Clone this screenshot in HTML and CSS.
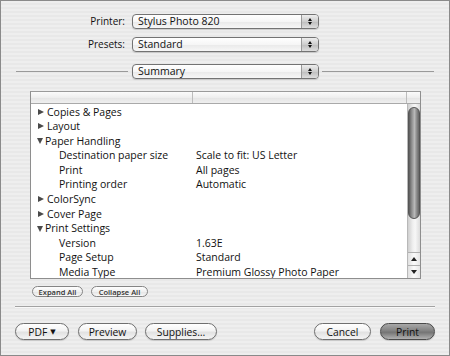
FILE: index.html
```html
<!DOCTYPE html>
<html>
<head>
<meta charset="utf-8">
<link rel="stylesheet" href="styles.css">
</head>
<body>
<div class="win">
  <div class="row">
    <span class="lbl">Printer:</span>
    <div class="popup"><span class="ptext">Stylus Photo 820</span><span class="parr"><i class="up"></i><i class="dn"></i></span></div>
  </div>
  <div class="row row2">
    <span class="lbl">Presets:</span>
    <div class="popup"><span class="ptext">Standard</span><span class="parr"><i class="up"></i><i class="dn"></i></span></div>
  </div>
  <div class="sumrow">
    <span class="line"></span>
    <div class="popup"><span class="ptext">Summary</span><span class="parr"><i class="up"></i><i class="dn"></i></span></div>
    <span class="line line-r"></span>
  </div>

  <div class="table">
    <div class="thead">
      <div class="th th1"></div>
      <div class="th th2"></div>
      <div class="th corner"></div>
    </div>
    <div class="tbody">
      <div class="rows">
        <div class="r"><span class="c1"><i class="tri"></i>Copies &amp; Pages</span><span class="c2"></span></div>
        <div class="r"><span class="c1"><i class="tri"></i>Layout</span><span class="c2"></span></div>
        <div class="r"><span class="c1"><i class="tri open"></i>Paper Handling</span><span class="c2"></span></div>
        <div class="r"><span class="c1 child">Destination paper size</span><span class="c2">Scale to fit: US Letter</span></div>
        <div class="r"><span class="c1 child">Print</span><span class="c2">All pages</span></div>
        <div class="r"><span class="c1 child">Printing order</span><span class="c2">Automatic</span></div>
        <div class="r"><span class="c1"><i class="tri"></i>ColorSync</span><span class="c2"></span></div>
        <div class="r"><span class="c1"><i class="tri"></i>Cover Page</span><span class="c2"></span></div>
        <div class="r"><span class="c1"><i class="tri open"></i>Print Settings</span><span class="c2"></span></div>
        <div class="r"><span class="c1 child">Version</span><span class="c2">1.63E</span></div>
        <div class="r"><span class="c1 child">Page Setup</span><span class="c2">Standard</span></div>
        <div class="r"><span class="c1 child">Media Type</span><span class="c2">Premium Glossy Photo Paper</span></div>
      </div>
      <div class="scroll">
        <div class="track"><div class="thumb"></div></div>
        <div class="sbtn"><i class="sup"></i></div>
        <div class="sbtn"><i class="sdn"></i></div>
      </div>
    </div>
  </div>

  <div class="smallbtns">
    <span class="sbutton b-expand">Expand All</span>
    <span class="sbutton b-collapse">Collapse All</span>
  </div>

  <div class="sep"></div>

  <div class="bar">
    <span class="btn b-pdf">PDF <span class="caret">&#9660;</span></span>
    <span class="btn b-preview">Preview</span>
    <span class="btn b-supplies">Supplies…</span>
    <span class="spacer"></span>
    <span class="btn b-cancel">Cancel</span>
    <span class="btn b-print">Print</span>
  </div>
</div>
</body>
</html>
```

FILE: styles.css
```css
* { box-sizing: border-box; }
html, body { margin: 0; padding: 0; }
body {
  font-family: "Open Sans", "DejaVu Sans", sans-serif;
  color: #111;
  background: #fff;
}
.win {
  width: 450px;
  height: 356px;
  border: 1px solid #8a8a8a;
  background: repeating-linear-gradient(to bottom, #eeeeee 0 2px, #e8e8e8 2px 4px);
  padding-top: 13px;
  overflow: hidden;
}
.row {
  display: grid;
  grid-template-columns: 124px 187px;
  column-gap: 7px;
  align-items: center;
  height: 15px;
}
.row2 { margin-top: 8px; }
.lbl {
  text-align: right;
  font-size: 10px;
  line-height: 15px;
}
.popup {
  position: relative;
  display: flex;
  height: 15px;
  width: 187px;
  border: 1px solid #737373;
  border-radius: 4px;
  background: linear-gradient(to bottom, #ffffff 0%, #f6f6f6 50%, #e9e9e9 51%, #f7f7f7 100%);
  box-shadow: 0 1px 1px rgba(0,0,0,0.15);
  overflow: hidden;
}
.ptext {
  flex: 1;
  padding-left: 5px;
  font-size: 10.5px;
  line-height: 13px;
}
.parr {
  width: 17px;
  border-left: 1px solid #9a9a9a;
  background: linear-gradient(to bottom, #eeeeee 0%, #cdcdcd 50%, #bdbdbd 51%, #dedede 100%);
  display: flex;
  flex-direction: column;
  align-items: center;
  justify-content: center;
  gap: 1px;
}
.parr i { display: block; width: 0; height: 0; border-left: 2.5px solid transparent; border-right: 2.5px solid transparent; }
.parr .up { border-bottom: 3px solid #111; }
.parr .dn { border-top: 3px solid #111; }

.sumrow {
  display: flex;
  align-items: center;
  margin: 12px 15px 0 15px;
  height: 15px;
}
.sumrow .line { flex: 1; height: 1px; background: #9a9a9a; margin-right: 4px; }
.sumrow .line-r { margin-right: 0; margin-left: 3px; }

.table {
  margin: 12px 0 0 29px;
  width: 391px;
  height: 188px;
  border: 1px solid #8e8e8e;
  border-top-color: #9a9a9a;
  background: #fff;
  display: flex;
  flex-direction: column;
}
.thead {
  display: flex;
  height: 12px;
  border-bottom: 1px solid #a9a9a9;
  background: linear-gradient(to bottom, #fbfbfb 0%, #eeeeee 50%, #e4e4e4 51%, #efefef 100%);
}
.th { height: 100%; }
.th1 { width: 162px; border-right: 1px solid #bcbcbc; }
.th2 { flex: 1; border-right: 1px solid #bcbcbc; }
.corner { width: 13px; }
.tbody { flex: 1; display: flex; overflow: hidden; }
.rows { flex: 1; padding-top: 0.5px; overflow: hidden; }
.r {
  display: flex;
  height: 14.6px;
  line-height: 14.6px;
  font-size: 10.5px;
  white-space: nowrap;
}
.c1 { width: 165px; padding-left: 6px; display: flex; align-items: center; }
.c1.child { padding-left: 28px; }
.c2 { flex: 1; }
.tri {
  display: inline-block;
  width: 0; height: 0;
  border-top: 3.5px solid transparent;
  border-bottom: 3.5px solid transparent;
  border-left: 6px solid #4a4a4a;
  margin-right: 3px;
  margin-left: 1px;
}
.tri.open {
  border-left: 3.5px solid transparent;
  border-right: 3.5px solid transparent;
  border-top: 6px solid #4a4a4a;
  border-bottom: 0;
  margin-left: 0;
  margin-right: 2px;
}
.scroll {
  width: 13px;
  display: flex;
  flex-direction: column;
  border-left: 1px solid #b8b8b8;
}
.track {
  flex: 1;
  padding-top: 3px;
  background: linear-gradient(to right, #cfcfcf 0%, #efefef 40%, #f7f7f7 60%, #dcdcdc 100%);
}
.thumb {
  height: 112px;
  border-radius: 6px;
  border: 1px solid #555;
  background: linear-gradient(to right, #5a5a5a 0%, #929292 30%, #b8b8b8 55%, #858585 80%, #666 100%);
}
.sbtn {
  height: 13px;
  border-top: 1px solid #b0b0b0;
  background: linear-gradient(to right, #e0e0e0, #fbfbfb 50%, #e6e6e6);
  display: flex;
  align-items: center;
  justify-content: center;
}
.sbtn i { display: block; width: 0; height: 0; border-left: 3px solid transparent; border-right: 3px solid transparent; }
.sup { border-bottom: 4px solid #222; }
.sdn { border-top: 4px solid #222; }

.smallbtns {
  display: flex;
  gap: 8px;
  margin: 7px 0 0 31px;
}
.sbutton {
  display: flex;
  align-items: center;
  justify-content: center;
  height: 11px;
  border: 1px solid #858585;
  border-radius: 6px;
  font-size: 7.5px;
  font-weight: 600;
  color: #333;
  background: linear-gradient(to bottom, #ffffff 0%, #f0f0f0 50%, #e3e3e3 51%, #f8f8f8 100%);
}
.b-expand { width: 51px; }
.b-collapse { width: 57px; }

.sep {
  margin: 9px 14px 0 14px;
  height: 1px;
  background: #a2a2a2;
  box-shadow: 0 1px 0 #f8f8f8;
}

.bar {
  display: flex;
  align-items: center;
  margin: 16px 14px 0 14px;
  gap: 9px;
}
.spacer { flex: 1; }
.btn {
  display: flex;
  align-items: center;
  justify-content: center;
  height: 17px;
  border: 1px solid #6f6f6f;
  border-radius: 9px;
  font-size: 10.3px;
  color: #111;
  background: linear-gradient(to bottom, #ffffff 0%, #f3f3f3 45%, #e2e2e2 55%, #f4f4f4 100%);
  box-shadow: 0 1px 1px rgba(0,0,0,0.15);
}
.b-pdf { width: 54px; }
.b-preview { width: 59px; }
.b-supplies { width: 72px; margin-left: -1px; }
.b-cancel { width: 57px; }
.b-print {
  width: 55px;
  border-color: #4a4a4a;
  background: linear-gradient(to bottom, #a8a8a8 0%, #828282 45%, #747474 55%, #b0b0b0 100%);
}
.caret { font-size: 7px; margin-left: 3px; }
```
